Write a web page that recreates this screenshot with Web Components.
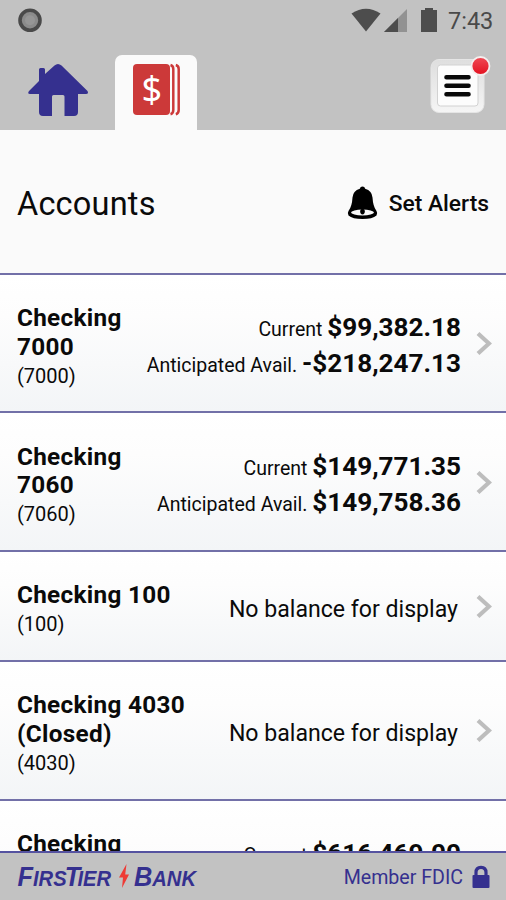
<!DOCTYPE html>
<html lang="en">
<head>
<meta charset="utf-8">
<meta name="viewport" content="width=device-width, initial-scale=1">
<title>Accounts</title>
<style>
  html, body {
    margin: 0;
    height: 100%;
    overflow: hidden;
  }
  body {
    font-family: Roboto, "Liberation Sans", sans-serif;
    color: #0a0a0a;
    --brand: #35308f;
    --bar: #c2c2c2;
    --line: #7270a8;
  }
</style>
</head>
<body>
<bank-app></bank-app>

<script>
const define = (name, html) => {
  const template = document.createElement('template')
  template.innerHTML = html

  window.customElements.define(name, class extends HTMLElement {
    constructor() {
      super()
      this.attachShadow({ mode: 'open' })
      this.shadowRoot.appendChild(template.content.cloneNode(true))
    }
  })
}

define('status-bar', `
<style>
  :host {
    display: flex;
    justify-content: space-between;
    height: 42px;
    color: #4a4a4a;
  }
  svg { display: block; }
  .right { display: flex; }
  .time {
    font-size: 23.5px;
    line-height: 42px;
    width: 58px;
  }
</style>
<svg width="50" height="42" viewBox="0 0 50 42">
  <circle cx="30" cy="20.3" r="10" fill="#8b8b8b" stroke="#4a4a4a" stroke-width="3.6"/>
  <circle cx="30" cy="20.3" r="5" fill="#969696"/>
</svg>
<div class="right">
  <svg width="98" height="42" viewBox="350 0 98 42">
    <path d="M351.500 13.500Q366 4 380.500 13.500L366 31.500Z" fill="#4d4d4d"/>
    <path d="M384 32L407 9V32Z" fill="#929292"/>
    <path d="M384 32L398 18V32Z" fill="#4d4d4d"/>
    <path d="M425 8h8v2h4v22h-16V10h4Z" fill="#4d4d4d"/>
  </svg>
  <div class="time">7:43</div>
</div>
`)

define('nav-tabs', `
<style>
  :host {
    display: flex;
    height: 88px;
  }
  svg { display: block; }
  .home { width: 115px; }
  .active {
    width: 82px;
    margin-top: 13px;
    border-radius: 7px 7px 0 0;
    background: #fafafa;
  }
  .menu { margin-left: auto; }
</style>
<svg class="home" height="88" viewBox="0 42 115 88" fill="#35308f">
  <path d="M39 69.500q0-1.500 1.500-1.500h3q1.500 0 1.500 1.500V74l9.500-8.500q3.500-3 7 0L87.500 91q1.500 3-1.500 3H78v18q0 4-4 4h-9.500V96.500q0-1.500-1.500-1.500H53.500q-1.500 0-1.500 1.500V116h-9q-4 0-4-4V94h-9q-3 0-1-3l10-10Z"/>
</svg>
<div class="active">
  <svg width="82" height="75" viewBox="115 55 82 75">
    <rect x="133" y="64" width="37" height="51" rx="4" fill="#cc3939"/>
    <g fill="none" stroke="#cc3939" stroke-width="2.500">
      <path d="M170.500 65q2.800 .8 2.800 4v41q0 3.500-2.800 4.300M175.800 65q2.900 .8 2.900 4v41q0 3.500-2.900 4.300"/>
    </g>
    <text x="151.800" y="102" text-anchor="middle" font-family="Noto Sans, sans-serif" font-size="36" fill="#fff">$</text>
  </svg>
</div>
<svg class="menu" width="86" height="88" viewBox="420 42 86 88">
  <defs>
    <linearGradient id="dot" x1="0" y1="0" x2="0" y2="1">
      <stop offset="0" stop-color="#f04a55"/>
      <stop offset="1" stop-color="#e3101f"/>
    </linearGradient>
    <linearGradient id="frame" x1="0" y1="0" x2="0" y2="1">
      <stop offset="0" stop-color="#dedede"/>
      <stop offset="1" stop-color="#f5f5f5"/>
    </linearGradient>
  </defs>
  <rect x="431" y="59.500" width="53" height="53" rx="8" fill="url(#frame)" stroke="#e5e5e5"/>
  <rect x="437.500" y="65" width="40.500" height="41" rx="3" fill="#fcfcfc" stroke="#d2d2d2"/>
  <path d="M446.500 77.300h22M446.500 85.800h22M446.500 94.300h22" stroke="#080808" stroke-width="4.600" stroke-linecap="round"/>
  <circle cx="480.500" cy="66" r="9" fill="url(#dot)" stroke="#f4eeee" stroke-width="1.800"/>
</svg>
`)

define('page-heading', `
<style>
  :host {
    display: flex;
    align-items: center;
    justify-content: space-between;
    flex: none;
    height: 142.800px;
    padding: 4px 17px 0;
    box-sizing: border-box;
    background: #fafafa;
  }
  h1 {
    margin: 0;
    padding-top: 2px;
    font-size: 32.500px;
    font-weight: 400;
    letter-spacing: .2px;
  }
  .alerts {
    display: flex;
    align-items: center;
    gap: 11px;
    font-size: 22.800px;
    font-weight: 500;
  }
  svg { display: block; }
</style>
<h1><slot></slot></h1>
<div class="alerts">
  <svg width="31" height="34" viewBox="0 0 31 34">
    <path d="M15.500 .5q2.200 0 2.700 2.200 6.800 2 7.300 8.800.5 9 4 13.500 1.500 2.500 0 4.500-4 3.500-14 3.500t-14-3.500q-1.500-2 0-4.500 3.500-4.500 4-13.500.5-6.800 7.300-8.800Q13.300 .5 15.500 .5Z"/>
    <ellipse cx="15.500" cy="26.500" rx="11.500" ry="2.900" fill="#fafafa"/>
    <ellipse cx="15.500" cy="25.600" rx="2.300" ry="2.800"/>
  </svg>
  <slot name="action"></slot>
</div>
`)

define('account-row', `
<style>
  :host {
    display: flex;
    align-items: center;
    flex: none;
    padding: 29.200px 14px 21.100px 17px;
    border-top: 2px solid var(--line);
    background: linear-gradient(#fff, #fdfdfd 30%, #f3f5f7);
  }
  .account {
    flex: 1;
    font-size: 24.300px;
    font-weight: 700;
    line-height: 28.800px;
    letter-spacing: .3px;
  }
  .number {
    font-size: 20px;
    font-weight: 400;
    letter-spacing: 0;
  }
  .balances {
    flex: none;
    text-align: right;
    margin: 0 15px 0 8px;
    padding-top: 1.600px;
  }
  svg {
    display: block;
    flex: none;
    margin-bottom: 6px;
  }
</style>
<div class="account">
  <slot></slot>
  <div class="number"><slot name="number"></slot></div>
</div>
<div class="balances"><slot name="balance"></slot></div>
<svg width="16" height="26" viewBox="0 0 16 26">
  <path d="M2 2.500L13 12.500L2 22.500" fill="none" stroke="#bdbdbd" stroke-width="4.200"/>
</svg>
`)

define('balance-line', `
<style>
  :host {
    display: block;
    font-size: 19.500px;
    line-height: 36px;
    white-space: nowrap;
  }
  b {
    font-size: 26.100px;
    font-weight: 700;
    line-height: 26px;
  }
</style>
<slot></slot> <b><slot name="amount"></slot></b>
`)

define('no-balance', `
<style>
  :host {
    display: block;
    padding: 0 3px 2.600px 0;
    font-size: 23.100px;
    line-height: 28px;
    white-space: nowrap;
  }
</style>
<slot></slot>
`)

define('bank-footer', `
<style>
  :host {
    display: flex;
    justify-content: space-between;
    align-items: center;
    flex: none;
    height: 49px;
    box-sizing: border-box;
    padding: 0 16px 0 0;
    border-top: 2px solid #5552a0;
    background: var(--bar);
    color: var(--brand);
  }
  svg { display: block; }
  .logo {
    font: italic 700 21.500px "Liberation Sans", Arial, sans-serif;
    fill: #35308f;
  }
  .cap { font-size: 27px; }
  .member {
    display: flex;
    align-items: center;
    gap: 9px;
    font-size: 19.600px;
  }
  .member span { padding-top: 2px; }
</style>
<svg class="logo" width="210" height="47" viewBox="0 0 210 47">
  <text x="17.500" y="33" textLength="93.500" lengthAdjust="spacingAndGlyphs"><tspan class="cap">F</tspan>IRS<tspan class="cap" dx="-2">T</tspan><tspan dx="-3">IER</tspan></text>
  <path d="M126.500 11L119 24.500H123L122 35L129 21.500H125.200Z" fill="#ee3a35"/>
  <text x="134" y="33" textLength="62" lengthAdjust="spacingAndGlyphs"><tspan class="cap">B</tspan>ANK</text>
</svg>
<div class="member">
  <span>Member FDIC</span>
  <svg width="18" height="24" viewBox="0 0 18 24">
    <path d="M4 11V7.500Q4 2.300 9 2.300T14 7.500V11" fill="none" stroke="#35308f" stroke-width="3.200"/>
    <rect x=".5" y="10" width="17" height="13" rx="1" fill="#35308f"/>
  </svg>
</div>
`)

define('bank-app', `
<style>
  :host {
    display: flex;
    flex-direction: column;
    height: 100vh;
    overflow: hidden;
  }
  header {
    flex: none;
    background: var(--bar);
  }
  main {
    display: flex;
    flex-direction: column;
    flex: 1;
    min-height: 0;
    overflow: hidden;
  }
</style>
<header>
  <status-bar></status-bar>
  <nav-tabs></nav-tabs>
</header>
<main>
  <page-heading>Accounts<span slot="action">Set Alerts</span></page-heading>
  <account-row>Checking 7000<span slot="number">(7000)</span>
    <balance-line slot="balance">Current<span slot="amount">$99,382.18</span></balance-line>
    <balance-line slot="balance">Anticipated Avail.<span slot="amount">-$218,247.13</span></balance-line>
  </account-row>
  <account-row>Checking 7060<span slot="number">(7060)</span>
    <balance-line slot="balance">Current<span slot="amount">$149,771.35</span></balance-line>
    <balance-line slot="balance">Anticipated Avail.<span slot="amount">$149,758.36</span></balance-line>
  </account-row>
  <account-row>Checking 100<span slot="number">(100)</span>
    <no-balance slot="balance">No balance for display</no-balance>
  </account-row>
  <account-row>Checking 4030 (Closed)<span slot="number">(4030)</span>
    <no-balance slot="balance">No balance for display</no-balance>
  </account-row>
  <account-row>Checking 7050<span slot="number">(7050)</span>
    <balance-line slot="balance">Current<span slot="amount">$616,469.00</span></balance-line>
    <balance-line slot="balance">Anticipated Avail.<span slot="amount">$616,469.00</span></balance-line>
  </account-row>
</main>
<bank-footer></bank-footer>
`)
</script>
</body>
</html>
